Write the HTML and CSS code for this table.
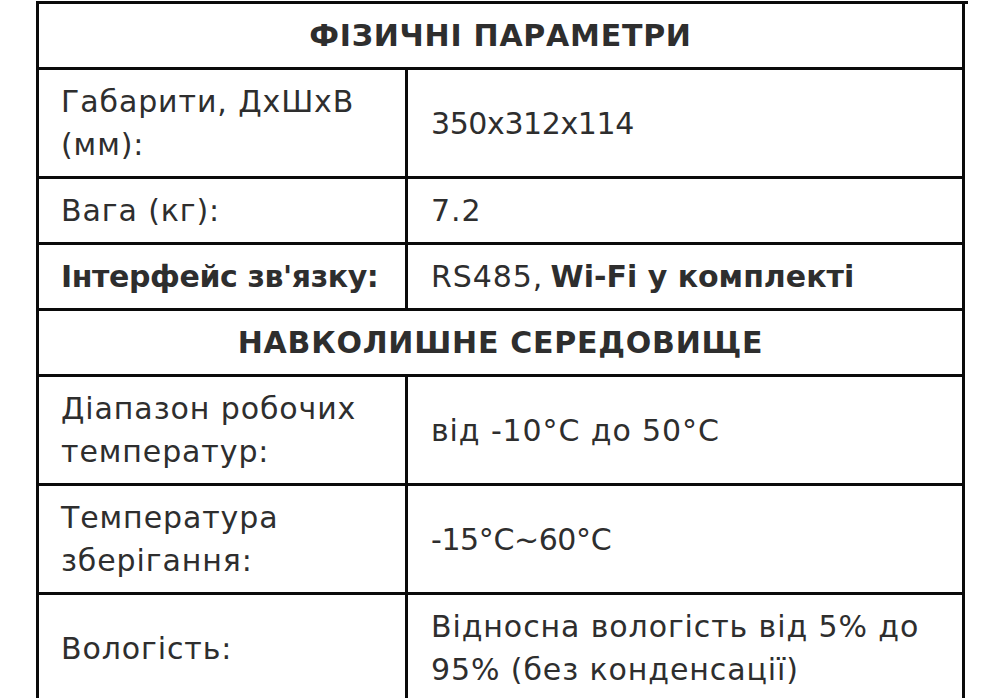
FILE: index.html
```html
<!DOCTYPE html>
<html lang="uk">
<head>
<meta charset="utf-8">
<title>Фізичні параметри</title>
<link rel="stylesheet" href="styles.css">
</head>
<body>
<div class="spec">
  <div class="head">ФІЗИЧНІ ПАРАМЕТРИ</div>
  <div class="cell label">Габарити, ДхШхВ (мм):</div>
  <div class="cell num">350x312x114</div>
  <div class="cell label">Вага (кг):</div>
  <div class="cell">7.2</div>
  <div class="cell label strong">Інтерфейс зв'язку:</div>
  <div class="cell">RS485, <b class="strong">Wi-Fi у комплекті</b></div>
  <div class="head">НАВКОЛИШНЕ СЕРЕДОВИЩЕ</div>
  <div class="cell label">Діапазон робочих температур:</div>
  <div class="cell">від -10°C до 50°C</div>
  <div class="cell label">Температура зберігання:</div>
  <div class="cell num">-15°C~60°C</div>
  <div class="cell label">Вологість:</div>
  <div class="cell">Відносна вологість від 5% до 95% (без конденсації)</div>
</div>
</body>
</html>
```

FILE: styles.css
```css
html, body {
  margin: 0;
  padding: 0;
  background: #ffffff;
  overflow: hidden;
}

body {
  font-family: "DejaVu Sans", "Open Sans", sans-serif;
  color: #2e2e2e;
  font-size: 30px;
  line-height: 43px;
  letter-spacing: 0.9px;
}

.spec {
  margin: 1px 0 0 36px;
  width: 929px;
  display: grid;
  grid-template-columns: 369px 557px;
  border-left: 3px solid #0a0a0a;
  border-top: 3px solid #0a0a0a;
}

.head,
.cell {
  border-right: 3px solid #0a0a0a;
  border-bottom: 3px solid #0a0a0a;
}

.head {
  grid-column: 1 / -1;
  text-align: center;
  font-weight: 600;
  letter-spacing: 0.75px;
  padding: 10px 20px;
}

.cell {
  display: flex;
  align-items: center;
  padding: 10px 20px 10px 23px;
}

.cell.label {
  padding-left: 22px;
  padding-right: 6px;
}

.cell.num {
  letter-spacing: -0.4px;
}

.strong {
  font-weight: 600;
  letter-spacing: -0.4px;
}

b.strong {
  margin-left: 0.25em;
  letter-spacing: 0;
}

.cell.label.strong {
  white-space: nowrap;
}
```
